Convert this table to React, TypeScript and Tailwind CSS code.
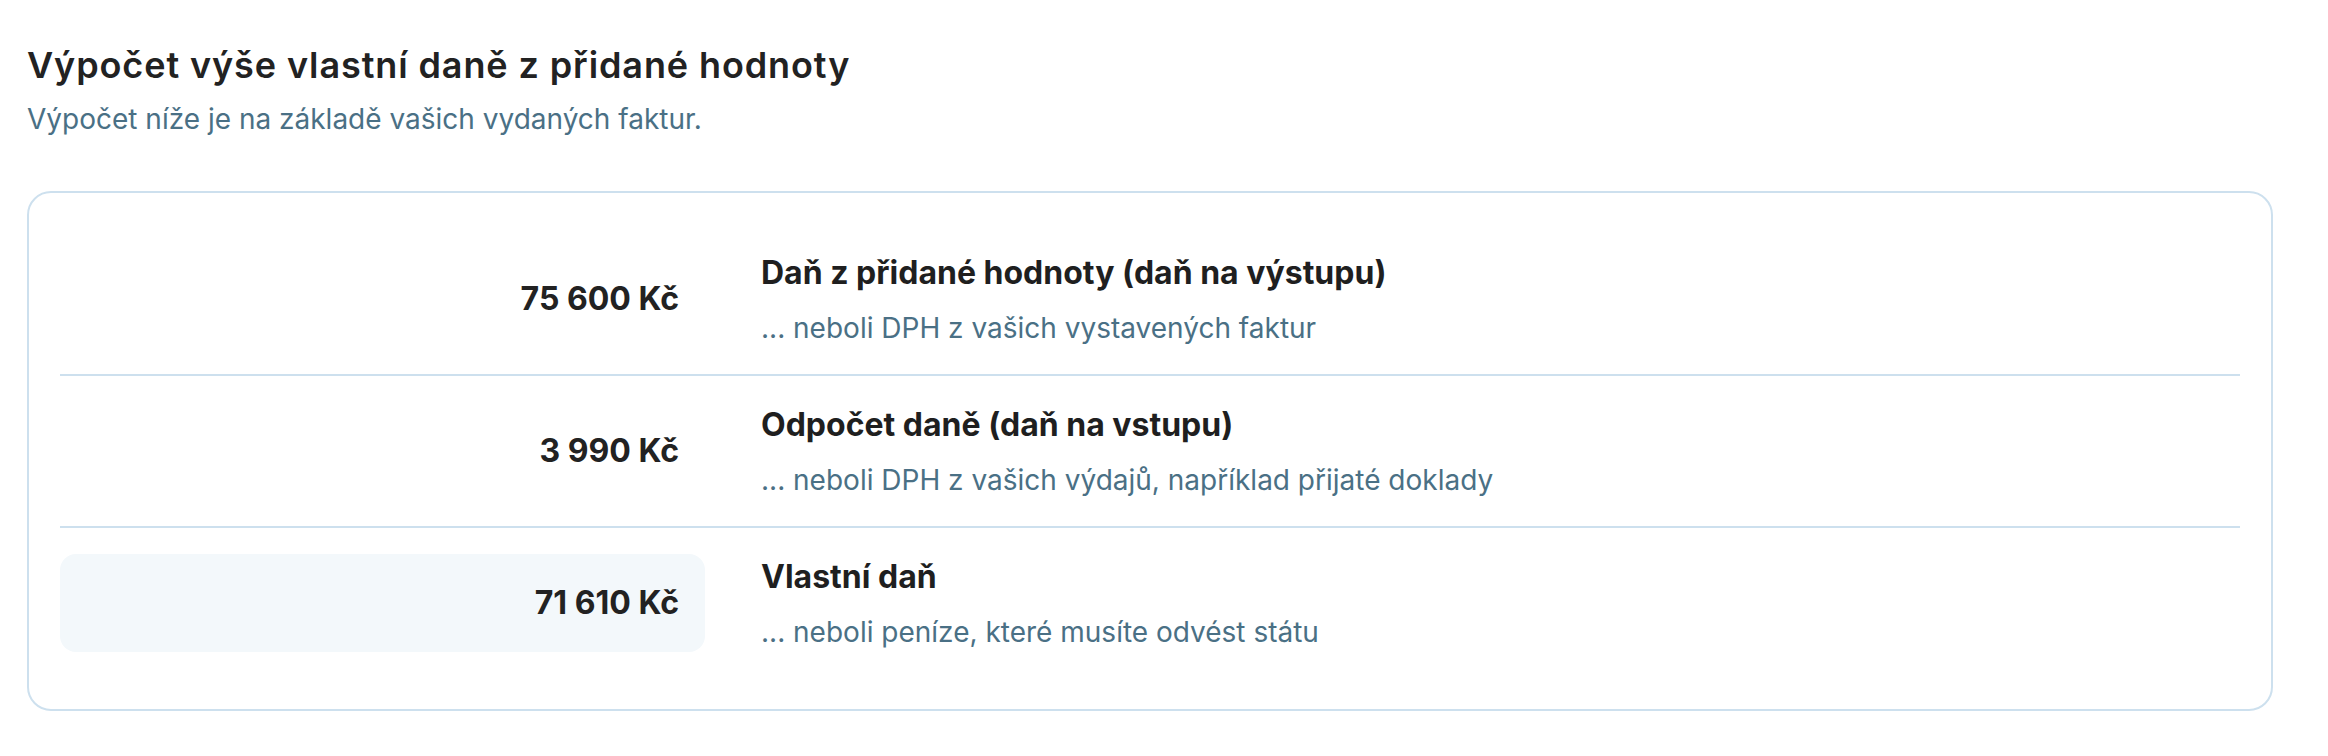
const rows = [
  {
    amount: "75 600 Kč",
    title: "Daň z přidané hodnoty (daň na výstupu)",
    desc: "... neboli DPH z vašich vystavených faktur",
  },
  {
    amount: "3 990 Kč",
    title: "Odpočet daně (daň na vstupu)",
    desc: "... neboli DPH z vašich výdajů, například přijaté doklady",
  },
  {
    amount: "71 610 Kč",
    title: "Vlastní daň",
    desc: "... neboli peníze, které musíte odvést státu",
    highlight: true,
  },
];

function Row({
  amount,
  title,
  desc,
  highlight,
}: {
  amount: string;
  title: string;
  desc: string;
  highlight?: boolean;
}) {
  return (
    <div className="flex items-center py-[26px]">
      <div
        className={
          "flex h-[98px] w-[645px] shrink-0 items-center justify-end rounded-[16px] pr-[26px] " +
          (highlight ? "bg-[#f3f8fb]" : "")
        }
      >
        <span className="text-[32px] font-bold leading-none text-[#222222]">{amount}</span>
      </div>
      <div className="ml-[56px]">
        <h3 className="text-[32px] font-bold leading-[44px] text-[#1f1f1f]">{title}</h3>
        <p className="mt-[13px] text-[28px] leading-[40px] text-[#4a7085]">{desc}</p>
      </div>
    </div>
  );
}

export default function App() {
  return (
    <div
      className="h-[756px] w-full bg-white pl-[27px] pt-[43px]"
      style={{ fontFamily: "Inter, 'Noto Sans', sans-serif" }}
    >
      <h1 className="text-[36px] font-semibold leading-[44px] tracking-[0.9px] text-[#222222]">
        Výpočet výše vlastní daně z přidané hodnoty
      </h1>
      <p className="mt-[14px] text-[28px] leading-[36px] text-[#4a7085]">
        Výpočet níže je na základě vašich vydaných faktur.
      </p>

      <div className="mt-[54px] w-[2246px] rounded-[24px] border-2 border-[#cde0ee] p-[31px]">
        {rows.map((r, i) => (
          <div key={r.amount}>
            {i > 0 && <div className="h-[2px] bg-[#cde0ee]" />}
            <Row {...r} />
          </div>
        ))}
      </div>
    </div>
  );
}
